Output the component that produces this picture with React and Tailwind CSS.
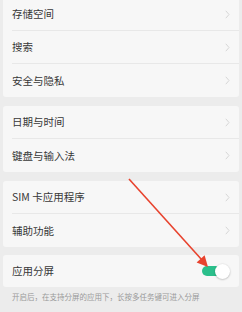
const groups = [
  ["存储空间", "搜索", "安全与隐私"],
  ["日期与时间", "键盘与输入法"],
  ["SIM 卡应用程序", "辅助功能"],
];

const Chevron = () => (
  <svg width="5" height="9" viewBox="0 0 5 9" className="shrink-0">
    <path d="M0.8 0.8 L4 4.5 L0.8 8.2" fill="none" stroke="#d6d6d6" strokeWidth="1" />
  </svg>
);

const Row = ({ label }) => (
  <div className="h-[33px] ml-[9px] pr-[9px] flex items-center justify-between border-b border-[#e8e8e8] last:border-b-0">
    <span className="text-[10.5px] text-[#383838]">{label}</span>
    <Chevron />
  </div>
);

export default function App() {
  return (
    <div
      className="relative w-[242px] h-[312px] overflow-hidden bg-[#ececec]"
      style={{ fontFamily: '"Noto Sans CJK SC", "Noto Sans", sans-serif' }}
    >
      <div className="-mt-[2px] px-[3px] flex flex-col gap-[9px]">
        {groups.map((g, i) => (
          <div key={i} className="bg-[#f7f7f7] rounded-[3px] flex flex-col">
            {g.map((label) => (
              <Row key={label} label={label} />
            ))}
          </div>
        ))}
        <div className="-mt-[1px] bg-[#f7f7f7] rounded-[3px] h-[32px] pl-[9px] pr-[9px] flex items-center justify-between">
          <span className="text-[10.5px] text-[#383838]">应用分屏</span>
          <div className="relative w-[28px] h-[15px] flex items-center">
            <div className="w-[24px] h-[10px] rounded-full bg-[#2bbf8b]" />
            <div className="absolute right-0 top-0 w-[15px] h-[15px] rounded-full bg-white shadow-[0_0.5px_2px_rgba(0,0,0,0.3)]" />
          </div>
        </div>
      </div>
      <p className="px-[12px] mt-[4px] text-[7.5px] text-[#9a9a9a] whitespace-nowrap">
        开启后，在支持分屏的应用下，长按多任务键可进入分屏
      </p>
      <svg className="absolute left-0 top-0 pointer-events-none" width="242" height="312">
        <line x1="129" y1="179" x2="202" y2="260" stroke="#e8432e" strokeWidth="1.6" />
        <polygon points="208,267 196.6,262.4 204.6,255.2" fill="#e8432e" />
      </svg>
    </div>
  );
}
